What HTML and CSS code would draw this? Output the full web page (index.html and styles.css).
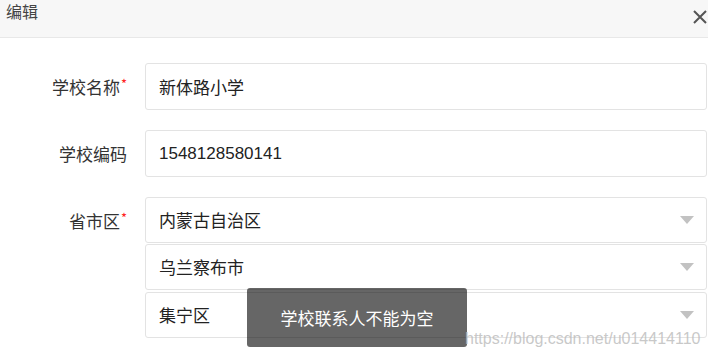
FILE: index.html
```html
<!DOCTYPE html>
<html lang="zh-CN">
<head>
    <meta charset="UTF-8">
    <title>编辑</title>
    <link rel="stylesheet" href="styles.css">
</head>
<body>
<div class="dialog">
    <div class="dialog-header">
        <span class="dialog-title">编辑</span>
        <a href="javascript:" class="dialog-close">
            <svg width="14" height="14" viewBox="0 0 14 14"><path d="M1 1L13 13M13 1L1 13" stroke="#555" stroke-width="2"/></svg>
        </a>
    </div>
    <div class="dialog-body">
        <div class="form-row">
            <label class="form-label">学校名称<i class="req">*</i></label>
            <div class="form-field">
                <div class="input">新体路小学</div>
            </div>
        </div>
        <div class="form-row">
            <label class="form-label">学校编码</label>
            <div class="form-field">
                <div class="input num">1548128580141</div>
            </div>
        </div>
        <div class="form-row">
            <label class="form-label">省市区<i class="req">*</i></label>
            <div class="form-field">
                <div class="input select">内蒙古自治区<span class="caret"></span></div>
                <div class="input select">乌兰察布市<span class="caret"></span></div>
                <div class="input select">集宁区<span class="caret"></span></div>
            </div>
        </div>
    </div>
    <div class="toast">学校联系人不能为空</div>
    <div class="watermark">https://blog.csdn.net/u014414110</div>
</div>
</body>
</html>
```

FILE: styles.css
```css
* {
    margin: 0;
    padding: 0;
    box-sizing: border-box;
}

body {
    background: #fff;
    font-family: "Noto Sans CJK SC", "Liberation Sans", sans-serif;
    color: #333;
}

.dialog {
    position: relative;
    width: 708px;
    height: 356px;
    overflow: hidden;
}

.dialog-header {
    display: flex;
    justify-content: space-between;
    height: 38px;
    padding-left: 6px;
    background: #f7f7f7;
    border-bottom: 1px solid #e8e8e8;
}

.dialog-title {
    font-size: 16px;
    line-height: 23px;
    color: #444;
}

.dialog-close {
    display: block;
    width: 14px;
    height: 14px;
    margin-top: 5px;
    margin-right: 1px;
}

.dialog-body {
    padding: 25px 1px 0 0;
}

.form-row {
    display: flex;
    align-items: flex-start;
    margin-bottom: 20px;
}

.form-label {
    width: 127px;
    height: 47px;
    margin-right: 18px;
    font-size: 17px;
    line-height: 47px;
    text-align: right;
    color: #333;
}

.req {
    position: relative;
    top: -5px;
    font-style: normal;
    font-size: 13px;
    color: #f22;
    margin-left: 1px;
}

.form-field {
    flex: 1;
}

.input {
    position: relative;
    height: 47px;
    padding-left: 13px;
    font-size: 17px;
    line-height: 45px;
    color: #222;
    border: 1px solid #e3e3e3;
    border-radius: 3px;
}

.num {
    font-family: "Liberation Sans", sans-serif;
    font-size: 17px;
}

.select {
    height: 46px;
    line-height: 44px;
}

.select + .select {
    margin-top: 1px;
}

.select:last-child {
    margin-top: 2px;
}

.caret {
    position: absolute;
    right: 12px;
    top: 18px;
    width: 0;
    height: 0;
    border-left: 7px solid transparent;
    border-right: 7px solid transparent;
    border-top: 8px solid #c2c2c2;
}

.toast {
    position: absolute;
    left: 247px;
    top: 288px;
    width: 220px;
    height: 59px;
    font-size: 17px;
    line-height: 59px;
    text-align: center;
    color: #fff;
    background: rgba(0, 0, 0, .6);
    border-radius: 3px;
}

.watermark {
    position: absolute;
    left: 465px;
    top: 330px;
    font-family: "Liberation Sans", sans-serif;
    font-size: 16px;
    color: rgba(190, 190, 190, .85);
}
```
